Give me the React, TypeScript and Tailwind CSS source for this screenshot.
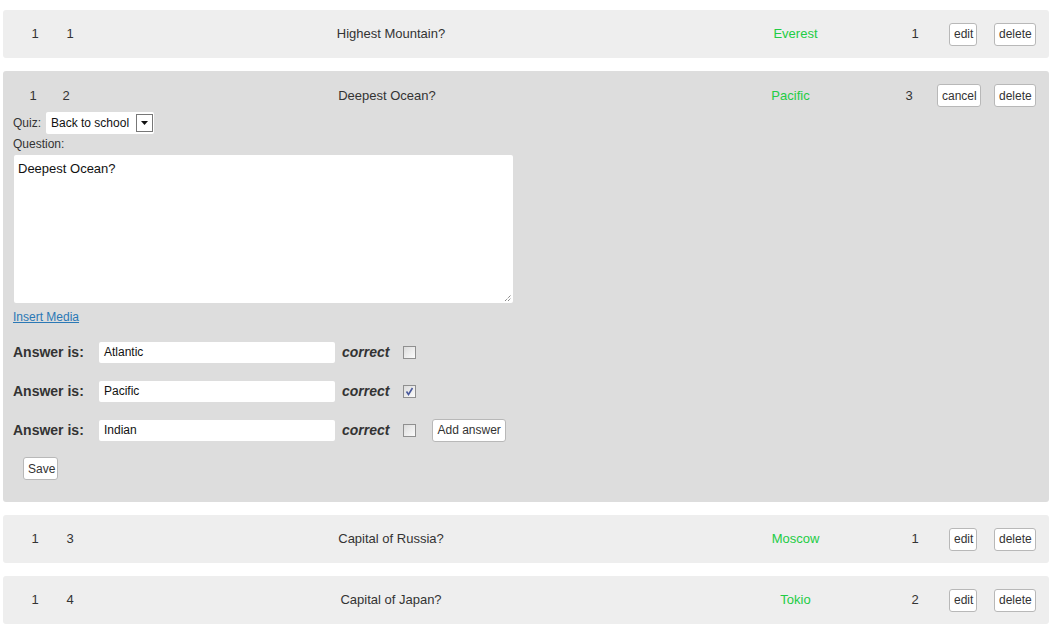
import { useState } from 'react';

type Question = {
    quiz: number;
    id: number;
    text: string;
    answer: string;
    count: number;
};

const questions: Question[] = [
    { quiz: 1, id: 1, text: 'Highest Mountain?', answer: 'Everest', count: 1 },
    { quiz: 1, id: 2, text: 'Deepest Ocean?', answer: 'Pacific', count: 3 },
    { quiz: 1, id: 3, text: 'Capital of Russia?', answer: 'Moscow', count: 1 },
    { quiz: 1, id: 4, text: 'Capital of Japan?', answer: 'Tokio', count: 2 },
];

const btn =
    'h-[23px] whitespace-nowrap rounded-[3px] border border-[#b8b8b8] bg-white px-[4px] text-[12px] leading-none text-[#333]';

function Checkbox({ checked }: { checked: boolean }) {
    return (
        <span className="flex h-[13px] w-[13px] items-center justify-center border border-[#8f8f8f] bg-gradient-to-br from-[#dcdcdc] to-[#fbfbfb]">
            {checked ? (
                <svg viewBox="0 0 11 11" className="h-[11px] w-[11px]">
                    <path d="M2.5 5.5 L4.5 8.5 L8.5 2" fill="none" stroke="#4a5a9c" strokeWidth="1.6" />
                </svg>
            ) : null}
        </span>
    );
}

function Row({ q }: { q: Question }) {
    return (
        <div className="flex h-12 items-center rounded-[3px] bg-[#eeeeee] pl-[17px]">
            <span className="w-[30px] text-center">{q.quiz}</span>
            <span className="ml-[5px] w-[30px] text-center">{q.id}</span>
            <span className="w-[612px] text-center">{q.text}</span>
            <span className="w-[197px] text-center text-[#22cc44]">{q.answer}</span>
            <span className="w-[42px] text-center">{q.count}</span>
            <button className={`${btn} ml-[13px] w-[28px]`}>edit</button>
            <button className={`${btn} ml-[17px] w-[42px]`}>delete</button>
        </div>
    );
}

function EditRow({ q }: { q: Question }) {
    const [answers] = useState([
        { text: 'Atlantic', correct: false },
        { text: 'Pacific', correct: true },
        { text: 'Indian', correct: false },
    ]);

    return (
        <div className="flex flex-col rounded-[3px] bg-[#dddddd] pt-[13px] pb-[22px]">
            <div className="flex h-[23px] items-center pl-[15px]">
                <span className="w-[30px] text-center">{q.quiz}</span>
                <span className="ml-[3px] w-[30px] text-center">{q.id}</span>
                <span className="w-[612px] text-center">{q.text}</span>
                <span className="w-[195px] text-center text-[#22cc44]">{q.answer}</span>
                <span className="w-[42px] text-center">{q.count}</span>
                <button className={`${btn} ml-[7px] w-[44px]`}>cancel</button>
                <button className={`${btn} ml-[13px] w-[42px]`}>delete</button>
            </div>

            <div className="flex flex-col pl-[10px]">
                <div className="mt-[5px] flex h-[22px] items-center">
                    <span className="text-[12px]">Quiz:</span>
                    <div className="relative ml-[5px] flex h-[22px] w-[108px] items-center rounded-[2px] bg-white pl-[5px] text-[12px] text-[#111]">
                        Back to school
                        <span className="absolute top-[2px] right-[1px] flex h-[18px] w-[17px] items-center justify-center border border-[#777] bg-white">
                            <svg viewBox="0 0 7 4" className="h-[4px] w-[7px]">
                                <path d="M0 0 L7 0 L3.5 4 Z" fill="#111" />
                            </svg>
                        </span>
                    </div>
                </div>

                <span className="mt-[3px] text-[12px] leading-[14px]">Question:</span>

                <div className="relative mt-[4px] ml-[1px] h-[148px] w-[499px] rounded-[2px] bg-white px-[4px] py-[4px] text-[13px] text-[#111]">
                    {q.text}
                    <svg viewBox="0 0 8 8" className="absolute right-[1px] bottom-[1px] h-[8px] w-[8px]">
                        <path d="M1 7 L7 1 M4 7 L7 4" stroke="#555" strokeWidth="1" strokeDasharray="1 1" />
                    </svg>
                </div>

                <a href="#" className="mt-[7px] self-start text-[12px] leading-[14px] text-[#2a78b5] underline">
                    Insert Media
                </a>

                <div className="mt-[17px] flex flex-col gap-[17px]">
                    {answers.map((a, i) => (
                        <div key={a.text} className="flex h-[22px] items-center">
                            <span className="w-[86px] text-[14px] font-bold">Answer is:</span>
                            <div className="flex h-[21px] w-[236px] items-center rounded-[2px] bg-white pl-[5px] text-[12px] text-[#111]">
                                {a.text}
                            </div>
                            <span className="ml-[7px] text-[14px] font-bold italic">correct</span>
                            <span className="ml-[14px]">
                                <Checkbox checked={a.correct} />
                            </span>
                            {i === answers.length - 1 ? (
                                <button className={`${btn} ml-[16px] h-[22px]`}>Add answer</button>
                            ) : null}
                        </div>
                    ))}
                </div>

                <button className={`${btn} mt-[16px] ml-[10px] h-[22px] w-[35px] self-start`}>Save</button>
            </div>
        </div>
    );
}

export default function App() {
    return (
        <div className="min-h-screen bg-white px-[3px] pt-[10px] font-['Liberation_Sans',Arial,sans-serif] text-[13px] text-[#333]">
            <div className="flex w-[1046px] flex-col gap-[13px]">
                {questions.map((q) =>
                    q.id === 2 ? <EditRow key={q.id} q={q} /> : <Row key={q.id} q={q} />,
                )}
            </div>
        </div>
    );
}
